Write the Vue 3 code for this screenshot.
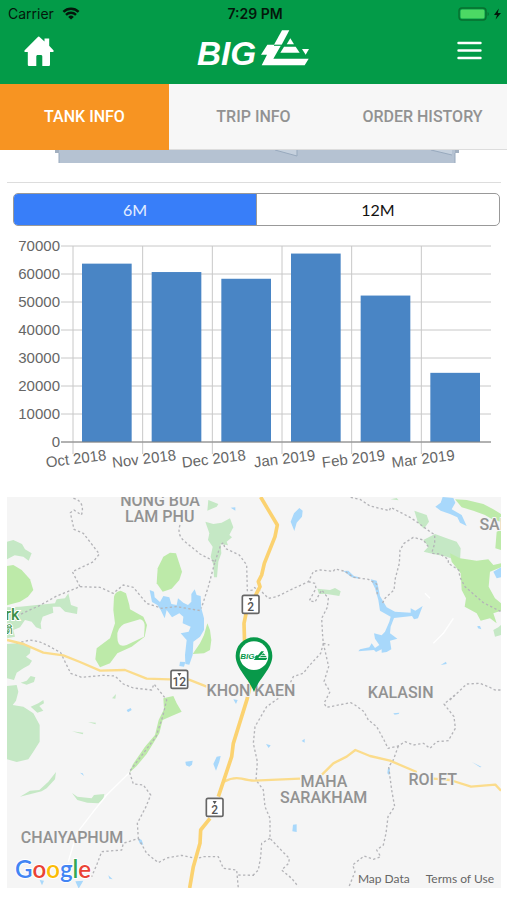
<template>
    <div class="app">
        <header class="top">
            <div class="status-bar">
                <div class="carrier">
                    <span>Carrier</span>
                    <svg class="wifi" viewBox="0 0 18 13" aria-hidden="true">
                        <path d="M1.4 4.8a11 11 0 0 1 15.2 0M4 7.8a7.2 7.2 0 0 1 10 0" fill="none" stroke="currentColor" stroke-width="2.4" />
                        <path d="M9 12.6 6.2 9.9a4 4 0 0 1 5.6 0z" fill="currentColor" />
                    </svg>
                </div>
                <div class="clock">7:29 PM</div>
                <div class="power">
                    <svg class="battery" viewBox="0 0 44 14" aria-hidden="true">
                        <rect x="1" y="1" width="27" height="12" rx="3" fill="none" stroke="#08702f" stroke-width="1.4" />
                        <rect x="2.5" y="2.5" width="24" height="9" rx="1.5" fill="#4cd964" />
                        <path d="M29.6 5c1.6.6 1.6 3.4 0 4z" fill="#08702f" />
                        <path d="M40.8 1.5 36 8h3l-1.4 4.6L43 6h-3.2z" fill="#04170b" />
                    </svg>
                </div>
            </div>
            <div class="nav-bar">
                <button class="icon-button" type="button" aria-label="Home">
                    <svg class="home" viewBox="0 0 30 30" aria-hidden="true">
                        <path d="M15 .5 20.5 5.500V2.500h4.700v7.300l4.200 4.400c.6.800.1 1.800-.8 1.800H26v12.400c0 1-.6 1.600-1.600 1.600h-6.100V20.500c0-1-.6-1.500-1.500-1.500h-3c-.9 0-1.500.5-1.500 1.500V30H5.400C4.400 30 3.800 29.400 3.800 28.400V16H1.400C.4 16 .1 15 .7 14.200L13.600 1.200C14.100.6 14.600.3 15 .5z" fill="#fff" />
                    </svg>
                </button>
                <svg class="logo" viewBox="20 10 345 126" role="img" aria-label="BIG">
                    <text x="23" y="125" class="logo-text">BIG</text>
                    <g fill="#fff">
                        <path d="M278 20h22l-23 43h-23z" />
                        <path d="M234 63h42l-24 42h106l-12 20H217l16-32h-18z" />
                        <path d="M303 44l11 18h-22z" />
                        <path d="M284 69h35l12 18h-58z" />
                        <path d="M338 76h21l-10 17z" />
                    </g>
                    <path d="M254 65h26" stroke="#039b48" stroke-width="3" />
                </svg>
                <button class="icon-button right" type="button" aria-label="Menu">
                    <svg class="burger" viewBox="0 0 25 19" aria-hidden="true">
                        <path d="M1.5 2h22M1.5 9.500h22M1.5 17h22" stroke="#fff" stroke-width="2.4" stroke-linecap="round" />
                    </svg>
                </button>
            </div>
        </header>

        <nav class="tabs">
            <button
                v-for="tab in tabs"
                :key="tab"
                type="button"
                class="tab"
                :class="{ active: tab === activeTab }"
                @click="activeTab = tab"
            >{{ tab }}</button>
        </nav>

        <main class="content">
            <!-- bottom edge of the tank drawing, scrolled under the tabs -->
            <svg class="tank" viewBox="0 0 494 13" aria-hidden="true">
                <path d="M48 0h404v3h-4v10H52V3h-4z" fill="#b5c2d2" />
                <path d="M48 0h4v3h-4zM448 0h4v3h-4z" fill="#a3b0c0" />
                <path d="M268 0h22v6zM424 0h21v5z" fill="#c6d1de" />
                <path d="M268 0l22 6V0M424 0l21 5M52 3v10M448 3v10" fill="none" stroke="#98a9bd" />
            </svg>

            <hr class="divider" />

            <div class="segments">
                <button
                    v-for="range in ranges"
                    :key="range"
                    type="button"
                    class="segment"
                    :class="{ active: range === activeRange }"
                    @click="activeRange = range"
                >{{ range }}</button>
            </div>

            <svg class="chart" viewBox="0 0 494 242" role="img" aria-label="Monthly usage">
                <g class="grid">
                    <line v-for="tick in yTicks" :key="tick.value" x1="54" :x2="chart.right" :y1="tick.y" :y2="tick.y" />
                    <line v-for="bar in bars" :key="bar.label" :x1="bar.gridX" :x2="bar.gridX" :y1="chart.top" :y2="chart.bottom + 12" />
                </g>
                <rect
                    v-for="bar in bars"
                    :key="bar.label"
                    :x="bar.x"
                    :y="bar.y"
                    :width="bar.width"
                    :height="bar.height"
                    fill="#4985c5"
                />
                <line class="axis" x1="54" :x2="chart.right" :y1="chart.bottom" :y2="chart.bottom" />
                <g class="axis-label">
                    <text v-for="tick in yTicks" :key="tick.value" x="53" :y="tick.y + 5">{{ tick.value }}</text>
                    <text
                        v-for="bar in bars"
                        :key="bar.label"
                        :transform="`translate(${bar.labelX} ${chart.bottom + 18}) rotate(-7)`"
                    >{{ bar.label }}</text>
                </g>
            </svg>

            <section class="map">
                <svg class="map-canvas" viewBox="21 21 1482 1173" role="img" aria-label="Map of Khon Kaen">
                    <rect x="21" y="21" width="1482" height="1173" fill="#f5f5f5" />
                    <path v-for="(d, i) in parks" :key="'p' + i" :d="d" fill="#c5e8c5" />
                    <path v-for="(d, i) in forests" :key="'f' + i" :d="d" fill="#bdeaa9" />
                    <path d="M352 440Q350 415 372 402L420 388Q434 390 434 410L432 440 380 465Q352 475 352 440z" fill="#f5f5f5" />
                    <path v-for="(d, i) in lakes" :key="'w' + i" :d="d" fill="#a8d8fb" />
                    <path v-for="(d, i) in faintRoads" :key="'n' + i" :d="d" class="faint" />
                    <path v-for="(d, i) in borders" :key="'b' + i" :d="d" class="border" />
                    <path v-for="(d, i) in roads" :key="'r' + i" :d="d" class="road" />
                    <path v-for="(d, i) in highways" :key="'h' + i" :d="d" class="highway" />

                    <g v-for="(shield, i) in shields" :key="'s' + i" :transform="`translate(${shield.x} ${shield.y})`">
                        <rect x="-25" y="-27" width="50" height="54" rx="5" fill="#fff" stroke="#666" stroke-width="5" />
                        <path d="M-6 -19h12l-6 10z" fill="#555" />
                        <text class="shield-text" x="0" y="19">{{ shield.number }}</text>
                    </g>

                    <g class="place">
                        <text v-for="place in places" :key="place.name" :x="place.x" :y="place.y">{{ place.name }}</text>
                    </g>
                    <text class="park-name" x="16" y="391">rk</text>
                    <text class="park-name thai" x="16" y="433">ติ</text>

                    <g>
                        <path d="M762 606C748 566 707 536 707 497a55 55 0 0 1 110 0C817 536 776 566 762 606z" fill="#08994a" />
                        <circle cx="762" cy="497" r="43" fill="#fff" />
                        <text class="pin-text" x="721" y="508">BIG</text>
                        <path d="M784 484h8l-9 12h-9zM769 496h13l-7 8h27l-4 6h-37l6-7h-5zM790 490l7 6h-13zM783 498h14l4 4h-22z" fill="#08994a" />
                    </g>

                    <text class="google" x="45" y="1165">
                        <tspan fill="#4285f4">G</tspan><tspan fill="#ea4335">o</tspan><tspan fill="#fbbc05">o</tspan><tspan fill="#4285f4">g</tspan><tspan fill="#34a853">l</tspan><tspan fill="#ea4335">e</tspan>
                    </text>
                </svg>
                <div class="map-links">
                    <a href="#">Map Data</a>
                    <a href="#">Terms of Use</a>
                </div>
            </section>
        </main>
    </div>
</template>

<script setup>
import { computed, ref } from 'vue';

    const tabs = ['TANK INFO', 'TRIP INFO', 'ORDER HISTORY'];
    const activeTab = ref('TANK INFO');

    const ranges = ['6M', '12M'];
    const activeRange = ref('6M');

    const usage = [
        { label: 'Oct 2018', value: 63700 },
        { label: 'Nov 2018', value: 60700 },
        { label: 'Dec 2018', value: 58300 },
        { label: 'Jan 2019', value: 67300 },
        { label: 'Feb 2019', value: 52300 },
        { label: 'Mar 2019', value: 24700 }
    ];

    // Plot area inside the chart's viewBox
    const chart = { left: 66, right: 484, top: 15, bottom: 211, max: 70000 };

    const toY = (value) => chart.bottom - (value / chart.max) * (chart.bottom - chart.top);

    const yTicks = Array.from({ length: 8 }, (_, i) => {
        const value = chart.max - i * 10000;
        return { value, y: toY(value) };
    });

    const bars = computed(() => {
        const step = (chart.right - chart.left) / usage.length;
        return usage.map((month, i) => {
            const gridX = chart.left + i * step;
            const y = toY(month.value);
            return {
                label: month.label,
                gridX,
                x: gridX + 9,
                y,
                width: step - 20,
                height: chart.bottom - y,
                labelX: gridX + step / 2 - 1
            };
        });
    });

    // Map shapes, bottom layers first
    const parks = [
        'M21 155L40 150 66 162 75 178 95 190 86 212 70 200 44 196 21 208z',
        'M21 352L60 350 110 345 165 340 170 328 195 325 205 310 213 345 233 352 231 372 195 365 180 350 158 350 160 368 128 380 122 400 124 418 108 412 95 395 75 390 60 412 40 420 45 440 21 445z',
        'M21 462L70 458 92 472 90 490 78 500 96 512 88 525 70 535 50 548 42 570 21 565z',
        'M62 578L80 572 92 558 106 562 102 576 80 584z',
        'M21 588L50 585 55 605 48 632 38 645 70 650 100 670 119 705 119 755 100 785 85 808 50 816 21 808z',
        'M622 62L625 30 655 42 650 50z',
        'M616 95L640 102 665 98 690 85 700 112 688 135 696 142 680 155 684 166 662 162 664 190 655 215 651 262 642 262 640 225 632 200 638 170 624 150 628 130z',
        'M92 650L115 640 130 630 132 640 118 648 130 662 112 668z',
        'M60 920L90 902 118 900 145 875 168 846 165 868 140 895 125 904z',
        'M216 909L232 920 275 925 282 915 313 912 310 928 295 940 262 938 232 930z',
        'M216 724L250 728 248 733z M264 696L288 698 286 703z M336 625L348 612 346 626z',
        'M1243 62L1280 75 1287 95 1272 116 1254 98z',
        'M1305 132L1340 145 1370 155 1382 175 1380 215 1340 200 1290 190 1271 185 1285 170 1270 150z',
        'M952 296L990 300 1005 294 1022 304 1018 318 980 312 957 312z',
        'M1480 420L1495 412 1503 405 1503 435 1485 440z M1172 28L1190 24 1196 31z'
    ];
    const forests = [
        'M21 228L40 225 65 240 90 268 100 300 84 320 60 335 21 346z',
        'M488 305L470 280 473 235 490 200 510 188 528 190 546 245 538 270 515 296z',
        'M342 320Q345 305 362 302L378 310 388 345 390 358 430 380 441 405 434 440 395 470 352 490 330 520 300 532 286 508 290 475 330 445 345 400 340 360z',
        'M578 492L600 460 612 435 622 400 630 420 634 450 630 480 612 490z',
        'M490 625L520 618 530 640 545 665 515 678 488 690 478 730 440 792 410 828 388 848 398 824 435 770 465 735 476 690 492 658z',
        'M1365 28L1400 30 1450 42 1480 58 1503 72 1503 95 1480 90 1455 75 1420 62 1385 52z M1490 125L1503 120 1503 180 1486 175z',
        'M1350 190L1380 205 1430 212 1465 208 1480 225 1503 220 1503 232 1470 245 1466 290 1485 325 1503 340 1503 362 1480 370 1490 400 1470 385 1442 392 1430 370 1394 350 1398 325 1385 300 1382 250 1355 215z'
    ];
    const lakes = [
        'M449 300L462 305 464 322 480 336 490 318 508 322 514 342 530 345 534 325 550 338 564 345 574 335 574 312 584 298 590 315 602 318 604 355 612 385 612 420 600 440 580 455 578 495 568 524 556 522 555 495 560 450 542 430 566 425 572 410 548 400 550 380 538 370 516 382 500 360 494 385 482 360 472 345 456 336z',
        'M540 515L556 516 552 530 538 528z',
        'M872 95L882 70 898 54 908 62 906 80 890 98 883 123z',
        'M1306 50L1322 38 1328 21 1360 24 1366 38 1355 58 1385 75 1400 108 1380 98 1372 82 1350 72 1322 62z',
        'M1480 245L1503 232 1503 262 1490 265z',
        'M1030 243L1045 242 1062 258 1078 262 1076 266 1055 262z',
        'M1112 268L1130 272 1135 292 1140 318 1160 352 1185 365 1232 368 1232 355 1246 362 1268 348 1254 385 1242 388 1236 378 1182 384 1172 410 1170 430 1192 446 1170 452 1174 478 1160 486 1145 488 1145 478 1128 486 1122 480 1075 484 1080 478 1108 472 1115 460 1125 474 1138 465 1125 446 1122 430 1145 436 1155 425 1168 395 1172 380 1140 362 1135 330 1125 295z',
        'M1322 525L1338 515 1340 522z M1432 408L1440 408 1444 418 1434 415z',
        'M692 53L706 52 706 62z M380 660L392 654 395 660 384 667z M240 848L248 850 252 858z',
        'M556 815L578 812 576 824 568 830 558 826z M640 822L650 800 662 798 658 815 648 842z M700 628L713 630 708 642z',
        'M413 1044L425 1050 430 1064 420 1062z',
        'M119 1170L132 1172 126 1186z M226 1174L250 1172 236 1196z M325 1156L338 1168 328 1166z',
        'M798 762L812 766 806 774z M905 753L914 746 914 758z M879 1004L890 1003 890 1026 877 1024z M1164 834L1170 836 1168 856 1162 850z',
        'M1416 816L1445 831 1440 832z M1180 670L1198 668 1196 672 1184 674z'
    ];
    const faintRoads = [
        'M388 848L320 915 280 965 230 1030 205 1115',
        'M1275 310L1290 325M1360 385L1330 430 1300 460'
    ];
    const borders = [
        // west
        'M220 25Q240 30 245 45T244 75L222 60 211 68 222 118 250 130 298 192 280 215 217 245 240 290 170 318 120 346 55 376',
        'M240 290L300 292 340 310 370 285 400 292 440 340 485 355 530 350 602 362',
        'M540 105Q530 135 555 155L600 192 645 215 625 290 604 355M645 215L662 165 670 158 675 175 718 195 740 225 742 302 765 300',
        'M50 460L90 450 120 456 150 470 182 488 195 515 212 550 245 562 310 556 345 558 370 582 400 594 455 600 462 582 500 630 488 680 468 740 388 845 400 882 430 885 452 915 438 950 412 1000 415 1045 370 1060 365 1080 305 1085 292 1120 275 1160',
        'M415 1045L440 1090 475 1118 500 1104 545 1096 590 1106 610 1100 655 1100 670 1135 710 1140 715 1195M715 1155L762 1156',
        // north and east
        'M1052 22L1080 28 1110 48 1168 62 1172 52 1230 82 1254 98 1290 125 1304 134 1304 160 1295 190 1320 192 1345 208 1345 220 1376 240 1380 262 1395 290 1450 338 1503 365',
        'M1285 170L1270 150 1240 142 1212 160 1200 180 1198 220 1186 265 1182 300 1155 325 1146 342',
        'M762 292L785 305 805 325 830 320 875 298 925 275 940 245 960 240 1000 244 1005 237 1035 244 1060 262 1105 268 1130 282 1132 315',
        'M925 275L945 280 948 295 928 332 945 336 965 300 985 325 982 352 965 385 968 440 970 460 988 465',
        'M970 460L962 490 925 530 910 550 880 560 870 580M970 460L986 530 972 575 990 605 972 640 980 652 1052 638 1065 645 1092 665 1105 690 1130 710 1152 750 1164 775 1195 768 1215 755 1240 765 1270 760 1290 775 1310 755 1345 752 1366 715 1362 680 1332 642 1370 610',
        'M1350 630L1400 582 1440 580 1465 590 1485 600 1503 600',
        'M835 625L800 650 765 710 760 760 772 815 768 870 790 900 795 950 810 985 810 1045 845 1082 868 1105 866 1120 845 1140 875 1165 895 1190M810 1045L785 1060 782 1100 775 1140 755 1160',
        'M1195 768L1180 810 1166 830 1175 900 1184 950 1164 980 1158 1030 1150 1065 1130 1080 1142 1100 1120 1108 1092 1098 1058 1125 1065 1145 1045 1195'
    ];
    const roads = [
        'M21 450L70 462 130 488 190 496 240 516 300 542 375 540 440 566 510 568M565 568L620 590',
        'M672 875Q700 860 725 866T762 872L900 866M966 854L1000 820 1040 800 1066 780 1110 798 1170 812 1250 846M1300 866L1350 870 1413 890 1486 884 1503 902'
    ];
    const highways = [
        'M782 21L804 58 832 105 825 140 793 220 785 255 775 275 780 290 762 325 740 362 732 400 735 500 752 580 742 625 700 760 695 800 655 920M630 985L602 1020 600 1060 580 1130 569 1194'
    ];

    const shields = [
        { number: '2', x: 752, y: 343 },
        { number: '12', x: 538, y: 568 },
        { number: '2', x: 644, y: 952 }
    ];
    const places = [
        { name: 'NONG BUA', x: 480, y: 49 },
        { name: 'LAM PHU', x: 479, y: 97 },
        { name: 'KHON KAEN', x: 753, y: 617 },
        { name: 'KALASIN', x: 1202, y: 625 },
        { name: 'SAKON', x: 1517, y: 121 },
        { name: 'MAHA', x: 972, y: 891 },
        { name: 'SARAKHAM', x: 971, y: 940 },
        { name: 'ROI ET', x: 1298, y: 886 },
        { name: 'CHAIYAPHUM', x: 216, y: 1059 }
    ];
</script>

<style>
    body {
        background: #fff;
    }
</style>

<style scoped>
    .app {
        font-family: Lato, "Open Sans", sans-serif;
        color: #222;
    }
    button {
        margin: 0;
        padding: 0;
        border: 0;
        background: none;
        font-family: inherit;
        cursor: pointer;
    }
    svg {
        display: block;
    }

    .top {
        height: 84px;
        background: #039b48;
    }
    .status-bar {
        display: grid;
        grid-template-columns: 1fr auto 1fr;
        align-items: center;
        height: 27px;
        padding: 0 5px 0 8px;
        font-family: Inter, sans-serif;
        font-size: 14px;
        color: #04170b;
    }
    .carrier {
        display: flex;
        align-items: center;
        gap: 8px;
    }
    .wifi {
        width: 18px;
        height: 13px;
    }
    .clock {
        font-weight: 600;
    }
    .power {
        display: flex;
        justify-content: flex-end;
    }
    .battery {
        width: 44px;
        height: 14px;
    }
    .nav-bar {
        display: grid;
        grid-template-columns: 1fr auto 1fr;
        align-items: start;
        padding: 0 25px 0 24px;
    }
    .icon-button {
        display: flex;
        align-items: center;
        height: 47px;
    }
    .icon-button.right {
        justify-content: flex-end;
    }
    .home {
        width: 30px;
        height: 30px;
    }
    .logo {
        width: 115px;
        height: 42px;
    }
    .logo-text {
        font: italic bold 100px "Liberation Sans", Arial, sans-serif;
        fill: #fff;
    }
    .burger {
        width: 25px;
        height: 19px;
    }

    .tabs {
        display: grid;
        grid-template-columns: repeat(3, 1fr);
        height: 66px;
        box-sizing: border-box;
        background: #f7f7f7;
    }
    .tab {
        font-family: Roboto, sans-serif;
        font-size: 16px;
        font-weight: 500;
        color: #929292;
        border-bottom: 1px solid #ddd;
    }
    .tab.active {
        background: #f79422;
        border-color: #f79422;
        color: #fff;
    }

    .content {
        padding: 0 6px 12px 7px;
    }
    .tank {
        width: 100%;
    }
    .divider {
        height: 1px;
        margin: 19px 0 10px;
        border: 0;
        background: #ddd;
    }
    .segments {
        display: flex;
        height: 33px;
        box-sizing: border-box;
        margin: 0 1px 0 6px;
        border: 1px solid #999;
        border-radius: 5px;
        overflow: hidden;
    }
    .segment {
        flex: 1;
        font-size: 16px;
        color: #111;
    }
    .segment.active {
        background: #387ef9;
        color: #e4eeff;
        border-right: 1px solid #999;
    }

    .chart {
        width: 100%;
        margin: 5px 0 24px;
    }
    .grid line {
        stroke: #c8c8c8;
    }
    .axis {
        stroke: #808080;
    }
    .axis-label text {
        font: 15px "Liberation Sans", Arial, sans-serif;
        fill: #666;
        text-anchor: end;
    }

    .map {
        position: relative;
    }
    .map-canvas {
        width: 100%;
    }
    .map path {
        stroke-linejoin: round;
    }
    .faint {
        fill: none;
        stroke: #fff;
        stroke-width: 4px;
    }
    .border {
        fill: none;
        stroke: #b4b4b8;
        stroke-width: 4px;
        stroke-dasharray: 7 7;
    }
    .road {
        fill: none;
        stroke: #fbdc8c;
        stroke-width: 7px;
    }
    .highway {
        fill: none;
        stroke: #fbd270;
        stroke-width: 11px;
    }
    .place text {
        font: 500 48px Roboto, sans-serif;
        fill: #929292;
        text-anchor: middle;
        stroke: #f5f5f5;
        stroke-width: 6px;
        paint-order: stroke;
    }
    .shield-text {
        font: 500 36px Roboto, sans-serif;
        fill: #555;
        text-anchor: middle;
    }
    .park-name {
        font: 500 48px Roboto, sans-serif;
        fill: #3c8f46;
        stroke: #fff;
        stroke-width: 6px;
        paint-order: stroke;
    }
    .park-name.thai {
        font-size: 36px;
    }
    .pin-text {
        font: italic bold 24px "Liberation Sans", Arial, sans-serif;
        fill: #08994a;
    }
    .google {
        font: 600 72px Lato, sans-serif;
        stroke: #fff;
        stroke-width: 6px;
        paint-order: stroke;
    }
    .map-links {
        position: absolute;
        right: 7px;
        bottom: 0;
        display: flex;
        gap: 16px;
    }
    .map-links a {
        font-size: 12px;
        line-height: 18px;
        color: #666;
        text-decoration: none;
    }
</style>
